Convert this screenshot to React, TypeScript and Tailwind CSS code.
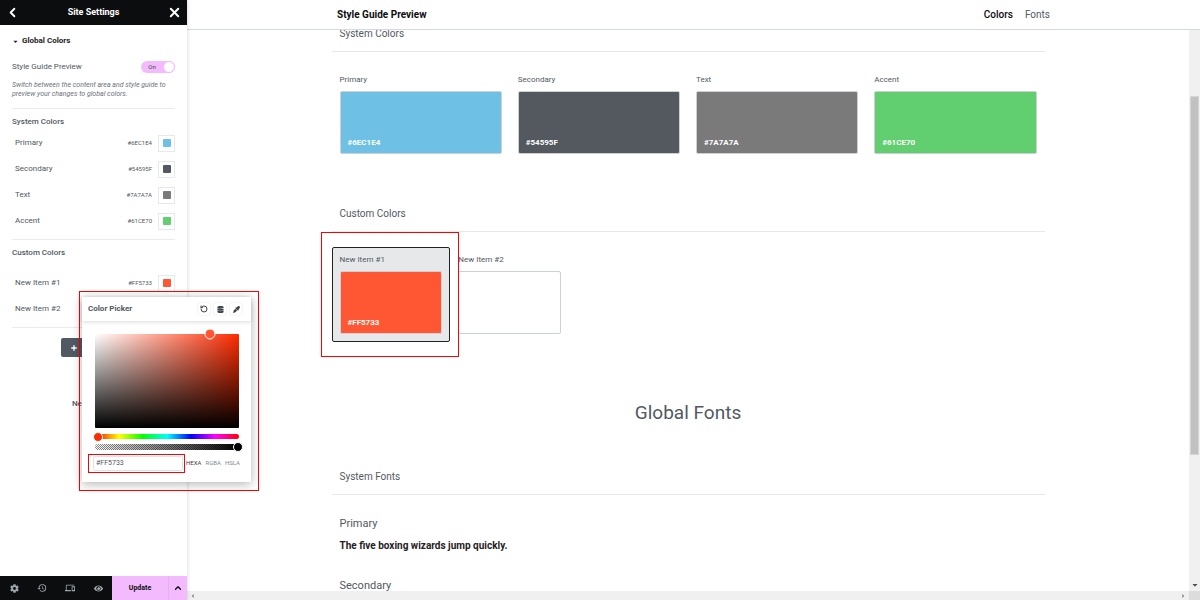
import { useState } from "react";
import type { ReactNode } from "react";
import { ChevronLeft, ChevronUp, Plus, RotateCcw, X } from "lucide-react";
import { FaCaretDown, FaCog, FaDatabase, FaEye, FaEyeDropper } from "react-icons/fa";
import { MdDevices, MdHistory } from "react-icons/md";

type Swatch = { name: string; value: string };

const systemColors: Swatch[] = [
  { name: "Primary", value: "#6EC1E4" },
  { name: "Secondary", value: "#54595F" },
  { name: "Text", value: "#7A7A7A" },
  { name: "Accent", value: "#61CE70" },
];

const customColors: Swatch[] = [
  { name: "New Item #1", value: "#FF5733" },
  { name: "New Item #2", value: "" },
];

function ColorRow({ name, value }: Swatch) {
  return (
    <li className="flex h-[26px] items-center pl-[3px]">
      <span className="flex-1 text-[8px] text-[#515962]">{name}</span>
      <span className="mr-[6px] text-[6px] text-[#515962]">{value}</span>
      <button
        type="button"
        aria-label={`Edit ${name}`}
        className="flex size-[17px] items-center justify-center border border-[#e6e9ec] bg-white"
      >
        <span className="size-2 rounded-[1px]" style={{ backgroundColor: value || "#ffffff" }} />
      </button>
    </li>
  );
}

function Sidebar() {
  const [preview, setPreview] = useState(true);
  return (
    <aside className="z-10 flex w-[187px] shrink-0 flex-col bg-white shadow-[1px_0_3px_rgba(0,0,0,0.12)]">
      <header className="flex h-[25px] shrink-0 items-center justify-between bg-[#0c0d0e] px-[5px] text-white">
        <button type="button" aria-label="Back">
          <ChevronLeft size={15} strokeWidth={3} />
        </button>
        <h1 className="text-[9px] font-bold">Site Settings</h1>
        <button type="button" aria-label="Close">
          <X size={15} strokeWidth={3} />
        </button>
      </header>

      <div className="min-h-0 flex-1 overflow-hidden px-3 leading-[10px]">
        <button type="button" className="mt-[11px] flex items-center gap-[3px] text-[8px] font-bold text-[#1f2124]">
          <FaCaretDown size={7} />
          Global Colors
        </button>

        <div className="mt-[15px] flex h-3 items-center justify-between">
          <label htmlFor="preview" className="text-[8px] text-[#515962]">
            Style Guide Preview
          </label>
          <span className="relative flex h-3 w-[34px] items-center rounded-full bg-[#f3bafd]">
            <input
              id="preview"
              type="checkbox"
              role="switch"
              checked={preview}
              onChange={(e) => setPreview(e.target.checked)}
              className="peer absolute inset-0 size-full cursor-pointer opacity-0"
            />
            <span className="pointer-events-none flex-1 text-center text-[6px] text-[#3f444b]">{preview ? "On" : "Off"}</span>
            <span className="pointer-events-none size-3 rounded-full border border-[#f3bafd] bg-white" />
          </span>
        </div>
        <p className="mt-2 text-[7px] leading-[9px] text-[#69727d] italic">
          Switch between the content area and style guide to preview your changes to global colors.
        </p>

        <section className="mt-[9px] border-t border-[#e9ebed] pt-[8px]">
          <h2 className="text-[8px] font-medium text-[#515962]">System Colors</h2>
          <ul className="mt-[3px]">
            {systemColors.map((c) => (
              <ColorRow key={c.name} {...c} />
            ))}
          </ul>
        </section>
        <section className="mt-[5px] border-t border-[#e9ebed] pt-[8px]">
          <h2 className="text-[8px] font-medium text-[#515962]">Custom Colors</h2>
          <ul className="mt-3">
            {customColors.map((c) => (
              <ColorRow key={c.name} {...c} />
            ))}
          </ul>
        </section>
        <div className="mt-[5px] flex flex-col items-center border-t border-[#e9ebed] pt-[10px]">
          <button
            type="button"
            className="flex h-[19px] items-center gap-1 rounded-[2px] bg-[#515962] px-[9px] text-[8px] font-medium text-white"
          >
            <Plus size={8} strokeWidth={4} />
            Add Color
          </button>
          <a href="#help" className="mt-[42px] text-[8px] font-medium text-[#515962]">
            Need Help ?
          </a>
        </div>
      </div>

      <footer className="flex h-6 shrink-0 bg-[#0c0d0e] text-[#9da5ae]">
        <div className="grid flex-1 grid-cols-4">
          <FooterButton label="Settings">
            <FaCog size={9} />
          </FooterButton>
          <FooterButton label="History">
            <MdHistory size={10} />
          </FooterButton>
          <FooterButton label="Responsive mode">
            <MdDevices size={10} />
          </FooterButton>
          <FooterButton label="Preview">
            <FaEye size={9} />
          </FooterButton>
        </div>
        <button type="button" className="w-14 bg-[#f3bafd] text-[7px] font-bold text-[#0c0d0e]">
          Update
        </button>
        <button
          type="button"
          aria-label="Save options"
          className="flex w-[19px] items-center justify-center border-l border-[#e7aef2] bg-[#f3bafd] text-[#0c0d0e]"
        >
          <ChevronUp size={10} strokeWidth={3} />
        </button>
      </footer>
    </aside>
  );
}

function FooterButton({ label, children }: { label: string; children: ReactNode }) {
  return (
    <button type="button" aria-label={label} className="flex items-center justify-center">
      {children}
    </button>
  );
}

const thumb =
  "h-[10px] min-w-0 flex-1 cursor-pointer appearance-none bg-transparent [&::-webkit-slider-thumb]:size-[10px] [&::-webkit-slider-thumb]:appearance-none [&::-webkit-slider-thumb]:rounded-full [&::-webkit-slider-thumb]:border [&::-webkit-slider-thumb]:border-white";

function ColorPicker() {
  const [hue, setHue] = useState(6);
  const [alpha, setAlpha] = useState(100);
  const [hex, setHex] = useState("#FF5733");
  return (
    <div className="absolute top-[291px] left-[79px] z-20 w-[180px] border border-[#f00] px-[2px] pt-[5px] pb-2 leading-[10px]">
      <div className="w-[169px] bg-white pb-[9px] shadow-[0_2px_10px_rgba(0,0,0,0.3)]">
        <header className="flex h-6 items-center justify-between pr-[9px] pl-[6px] shadow-[0_1px_4px_rgba(0,0,0,0.15)]">
          <h2 className="text-[8px] font-bold text-[#515962]">Color Picker</h2>
          <div className="flex gap-1 text-[#3f444b]">
            <PickerButton label="Reset">
              <RotateCcw size={8} strokeWidth={3} />
            </PickerButton>
            <PickerButton label="Global colors">
              <FaDatabase size={7} />
            </PickerButton>
            <PickerButton label="Pick from page">
              <FaEyeDropper size={7} />
            </PickerButton>
          </div>
        </header>

        <div className="mr-3 ml-[13px] mt-[13px]">
          <div className="relative h-[94px] rounded-[1px] bg-[linear-gradient(to_top,#000,transparent),linear-gradient(to_right,#fff,#ff2b00)]">
            <button
              type="button"
              aria-label="Saturation and brightness"
              className="absolute top-0 left-4/5 size-[11px] -translate-x-1/2 -translate-y-1/2 rounded-full border border-white bg-[#ff5733]"
            />
          </div>
          <div className="mt-[6px] flex h-[5px] items-center rounded-full bg-[linear-gradient(to_right,#f00,#ff0,#0f0,#0ff,#00f,#f0f,#f00)]">
            <input
              type="range"
              aria-label="Hue"
              min={0}
              max={360}
              value={hue}
              onChange={(e) => setHue(Number(e.target.value))}
              className={`${thumb} -mx-1 [&::-webkit-slider-thumb]:bg-[#ff2b00]`}
            />
          </div>
          <div className="mt-[5px] flex h-[6px] items-center rounded-full bg-[linear-gradient(to_right,transparent,#000),repeating-conic-gradient(#888_0_25%,#fff_0_50%)] bg-[length:100%_100%,2px_2px]">
            <input
              type="range"
              aria-label="Opacity"
              min={0}
              max={100}
              value={alpha}
              onChange={(e) => setAlpha(Number(e.target.value))}
              className={`${thumb} -mx-1 [&::-webkit-slider-thumb]:bg-black`}
            />
          </div>
        </div>

        <div className="mt-1 flex items-center pr-[11px] pl-[6px]">
          <div className="border border-[#f00] py-px pr-px pl-1">
            <input
              aria-label="Color value"
              value={hex}
              onChange={(e) => setHex(e.target.value)}
              className="block h-[15px] w-[90px] rounded-[2px] border border-[#e0e3e6] bg-white px-[2px] pb-[2px] text-[7px] text-[#515962] outline-none"
            />
          </div>
          <div className="flex flex-1 justify-between pb-[2px] pl-px text-[6px] text-[#818a96]">
            <button type="button" className="text-[#3f444b]">
              HEXA
            </button>
            <button type="button">RGBA</button>
            <button type="button">HSLA</button>
          </div>
        </div>
      </div>
    </div>
  );
}

function PickerButton({ label, children }: { label: string; children: ReactNode }) {
  return (
    <button
      type="button"
      aria-label={label}
      className="flex size-3 items-center justify-center rounded-[2px] bg-white shadow-[0_0_2px_rgba(0,0,0,0.15)]"
    >
      {children}
    </button>
  );
}

function SectionTitle({ children }: { children: ReactNode }) {
  return <h3 className="h-[22px] border-b border-[#e6e8ea] pl-2 text-[10px] leading-[8px] text-[#515962]">{children}</h3>;
}

function ColorCard({ name, value, active = false }: Swatch & { active?: boolean }) {
  return (
    <div className={active ? "relative" : ""}>
      <div
        className={`rounded-[2px] border px-[7px] pt-[7px] pb-[7px] ${active ? "border-[#1f2124] bg-[#e6e8ea]" : "border-transparent"}`}
      >
        <p className="text-[8px] leading-[10px] text-[#515962]">{name}</p>
        <div
          className="mt-[6px] flex h-[63px] items-end rounded-[2px] border border-[#cdd0d4] px-[7px] pb-1 text-[8px] leading-[12px] font-bold text-white"
          style={{ backgroundColor: value || "#ffffff" }}
        >
          {value}
        </div>
      </div>
      {active && <span className="pointer-events-none absolute -top-[15px] -right-[9px] -bottom-[15px] -left-[11px] border border-[#f00]" />}
    </div>
  );
}

function VerticalScrollBar() {
  return (
    <div className="flex w-[11px] shrink-0 flex-col items-center bg-[#f0f0f0] pt-[66px] pb-[2px]">
      <span className="h-[359px] w-[9px] border border-[#d5d5d5] bg-[#c1c1c1]" />
      <FaCaretDown size={8} className="mt-auto text-[#505050]" />
    </div>
  );
}

export default function App() {
  return (
    <div className="relative flex h-screen overflow-hidden bg-white font-['Roboto',sans-serif]">
      <Sidebar />
      <ColorPicker />

      <div className="flex min-w-0 flex-1 flex-col">
        <header className="h-[30px] shrink-0 border-b border-[#d5d8dc]">
          <div className="mx-auto flex h-full max-w-[713px] items-center justify-between text-[10px]">
            <h2 className="font-bold text-[#0c0d0e]">Style Guide Preview</h2>
            <nav className="flex gap-3">
              <a href="#colors" className="font-medium text-[#0c0d0e]">
                Colors
              </a>
              <a href="#fonts" className="text-[#515962]">
                Fonts
              </a>
            </nav>
          </div>
        </header>

        <div className="flex min-h-0 flex-1">
          <main className="min-w-0 flex-1 overflow-hidden">
            <div className="mx-auto max-w-[713px]">
              <section id="colors">
                <SectionTitle>System Colors</SectionTitle>
                <div className="mt-[15px] grid grid-cols-4">
                  {systemColors.map((c) => (
                    <ColorCard key={c.name} {...c} />
                  ))}
                </div>
              </section>
              <section className="mt-12">
                <SectionTitle>Custom Colors</SectionTitle>
                <div className="mt-[15px] grid grid-cols-6">
                  {customColors.map((c) => (
                    <ColorCard key={c.name} {...c} active={c.value !== ""} />
                  ))}
                </div>
              </section>

              <section id="fonts">
                <h2 className="mt-[59px] text-center text-[19px] leading-6 text-[#515962]">Global Fonts</h2>
                <div className="mt-12">
                  <SectionTitle>System Fonts</SectionTitle>
                </div>
                <div className="mt-[21px] pl-2">
                  <h4 className="text-[11px] leading-4 text-[#515962]">Primary</h4>
                  <p className="mt-[6px] text-[10px] leading-4 font-bold text-[#1f2124]">The five boxing wizards jump quickly.</p>
                  <h4 className="mt-6 text-[11px] leading-4 text-[#515962]">Secondary</h4>
                </div>
              </section>
            </div>
          </main>
          <VerticalScrollBar />
        </div>

        <div className="flex h-[9px] shrink-0 bg-[#f0f0f0]">
          <div className="flex flex-1 items-center justify-between px-[3px] text-[#8a8a8a]">
            <FaCaretDown size={6} className="rotate-90" />
            <FaCaretDown size={6} className="-rotate-90" />
          </div>
          <span className="w-[11px] bg-[#dcdcdc]" />
        </div>
      </div>
    </div>
  );
}
